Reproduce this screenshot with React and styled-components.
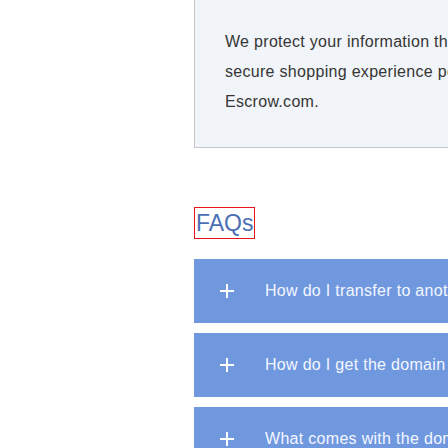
import React from "react"
import styled, { createGlobalStyle } from "styled-components"

const GlobalStyle = createGlobalStyle`
  html, body {
    margin: 0;
    padding: 0;
    overflow: hidden;
    background: #ffffff;
    font-family: "Liberation Sans", Arial, sans-serif;
  }
`

const Page = styled.div`
  display: flex;
  width: 900px;
`

const Gutter = styled.div`
  flex: 0 0 194px;
`

const Main = styled.main`
  flex: 0 0 700px;
  display: flex;
  flex-direction: column;
  align-items: flex-start;
`

const Notice = styled.section`
  align-self: stretch;
  background: #f1f4f8;
  border: 1px solid #c4c6c9;
  border-top: none;
  padding: 27px 30px 30px;
  font-size: 16px;
  line-height: 30px;
  letter-spacing: 0.3px;
  color: #363636;
`

const Heading = styled.h2`
  margin: 59px 0 20px;
  border: 1px solid #e8141a;
  font-size: 23px;
  font-weight: 400;
  line-height: 30px;
  color: #4a6fb5;
  padding: 0 0 0 1px;
`

const List = styled.div`
  align-self: stretch;
  display: flex;
  flex-direction: column;
  gap: 10px;
`

const Item = styled.button`
  display: flex;
  align-items: center;
  gap: 31px;
  height: 64px;
  padding: 0 0 0 26px;
  border: none;
  background: #7098df;
  color: #f4f7ff;
  font-family: inherit;
  font-size: 16px;
  letter-spacing: 0.3px;
  white-space: nowrap;
  text-align: left;
  cursor: pointer;
`

const Plus = () => (
  <svg width="14" height="14" viewBox="0 0 14 14">
    <path d="M7 0v14M0 7h14" stroke="#ffffff" strokeWidth="2" fill="none" />
  </svg>
)

const questions = [
  "How do I transfer to another registrar?",
  "How do I get the domain after purchase?",
  "What comes with the domain?",
]

export default function App() {
  return (
    <>
      <GlobalStyle />
      <Page>
        <Gutter />
        <Main>
          <Notice>
            We protect your information through a<br />
            secure shopping experience powered by<br />
            Escrow.com.
          </Notice>
          <Heading>FAQs</Heading>
          <List>
            {questions.map((q) => (
              <Item key={q}>
                <Plus />
                {q}
              </Item>
            ))}
          </List>
        </Main>
      </Page>
    </>
  )
}
